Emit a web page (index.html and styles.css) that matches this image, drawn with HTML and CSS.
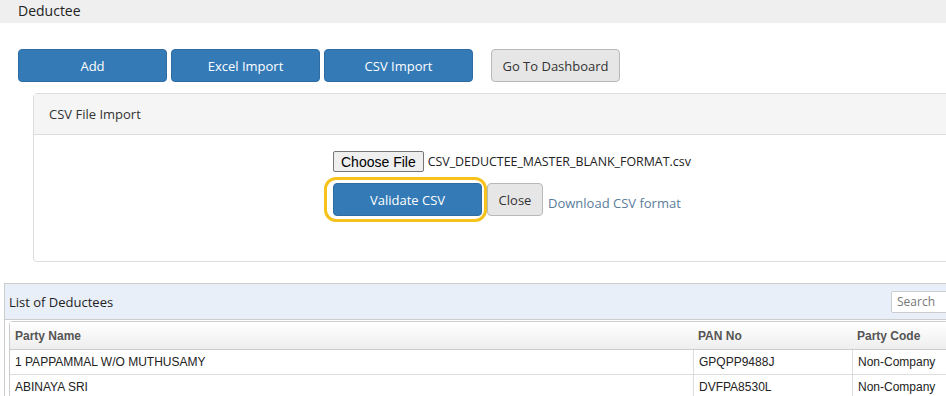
FILE: index.html
```html
<!DOCTYPE html>
<html>
<head>
    <title>Deductee</title>
    <link rel="stylesheet" href="styles.css">
</head>
<body>
    <div class="page-title">Deductee</div>

    <div class="button-container">
        <button class="blue-button">Add</button>
        <button class="blue-button">Excel Import</button>
        <button class="blue-button">CSV Import</button>
        <button class="gray-button dashboard-button">Go To Dashboard</button>
    </div>

    <div class="import-panel">
        <div class="import-heading">CSV File Import</div>
        <div class="import-body">
            <div class="file-row">
                <button class="choose-button">Choose File</button>
                <span class="file-name">CSV_DEDUCTEE_MASTER_BLANK_FORMAT.csv</span>
            </div>
            <div class="action-row">
                <span class="highlight">
                    <button class="blue-button validate-button">Validate CSV</button>
                </span>
                <button class="gray-button close-button">Close</button>
                <a class="download-link" href="#">Download CSV format</a>
            </div>
        </div>
    </div>

    <div class="list-panel">
        <div class="list-heading">
            <span>List of Deductees</span>
            <input class="search-box" type="text" placeholder="Search">
        </div>
        <table class="deductee-table">
            <thead>
                <tr>
                    <th class="col-name">Party Name</th>
                    <th class="col-pan">PAN No</th>
                    <th>Party Code</th>
                </tr>
            </thead>
            <tbody>
                <tr>
                    <td>1 PAPPAMMAL W/O MUTHUSAMY</td>
                    <td>GPQPP9488J</td>
                    <td>Non-Company</td>
                </tr>
                <tr>
                    <td>ABINAYA SRI</td>
                    <td>DVFPA8530L</td>
                    <td>Non-Company</td>
                </tr>
            </tbody>
        </table>
    </div>
</body>
</html>
```

FILE: styles.css
```css
body {
    margin: 0;
    background-color: white;
    font-family: "Open Sans", "Noto Sans", sans-serif;
    color: #333;
    overflow: hidden;
    width: 946px;
}
.page-title {
    height: 23px;
    line-height: 22px;
    padding-left: 18px;
    background-color: #efefef;
    font-size: 14px;
    color: #222;
}
.button-container {
    display: flex;
    gap: 4px;
    margin: 26px 0 0 18px;
}
.blue-button {
    width: 149px;
    height: 33px;
    background-color: #337ab7;
    border: 1px solid #2e6da4;
    border-radius: 4px;
    color: white;
    font-family: "Open Sans", sans-serif;
    font-size: 13px;
    cursor: pointer;
}
.gray-button {
    height: 33px;
    background-color: #e6e6e6;
    border: 1px solid #b8b8b8;
    border-radius: 4px;
    color: #333;
    font-family: "Open Sans", sans-serif;
    font-size: 13px;
    cursor: pointer;
}
.dashboard-button {
    width: 129px;
    margin-left: 14px;
}
.import-panel {
    width: 960px;
    margin: 11px 0 0 33px;
    border: 1px solid #ddd;
    border-radius: 4px;
}
.import-heading {
    height: 40px;
    line-height: 40px;
    padding-left: 15px;
    background-color: #f5f5f5;
    border-bottom: 1px solid #ddd;
    font-size: 13px;
    color: #333;
}
.import-body {
    height: 126px;
    padding: 16px 0 0 299px;
    box-sizing: border-box;
}
.file-row {
    display: flex;
    align-items: center;
    gap: 4px;
}
.choose-button {
    height: 21px;
    padding: 0 7px;
    background-color: #efefef;
    border: 1px solid #767676;
    border-radius: 2px;
    font-family: "Liberation Sans", Arial, sans-serif;
    font-size: 14px;
    color: #000;
}
.file-name {
    font-size: 12.4px;
    color: #222;
}
.action-row {
    display: flex;
    align-items: center;
    margin: 5px 0 0 -9px;
}
.highlight {
    display: inline-flex;
    padding: 3px 2px 3px 6px;
    border: 3px solid #f6c21c;
    border-radius: 12px;
}
.validate-button {
    width: 149px;
}
.close-button {
    width: 56px;
    margin-left: 0;
}
.download-link {
    margin: 6px 0 0 5px;
    font-size: 13px;
    color: #5a7d9b;
    text-decoration: none;
}
.list-panel {
    width: 960px;
    margin: 21px 0 0 4px;
    border-top: 1px solid #ccc;
    border-left: 1px solid #ccc;
}
.list-heading {
    display: flex;
    align-items: center;
    justify-content: space-between;
    height: 35px;
    padding-left: 4px;
    background-color: #e9eff8;
    border-bottom: 1px solid #ccc;
    font-size: 13px;
    color: #222;
}
.search-box {
    width: 74px;
    height: 22px;
    margin-right: 0;
    box-sizing: border-box;
    border: 1px solid #ccc;
    border-radius: 2px;
    padding: 0 5px;
    font-family: "Open Sans", sans-serif;
    font-size: 12px;
}
.search-box::placeholder {
    color: #777;
}
.deductee-table {
    width: 950px;
    margin: 1px 0 0 4px;
    border-collapse: separate;
    border-spacing: 0;
    font-family: "Liberation Sans", Arial, sans-serif;
    font-size: 12px;
    border-top: 1px solid #ccc;
    border-left: 1px solid #ccc;
    border-top-left-radius: 4px;
}
.deductee-table th {
    height: 27px;
    padding: 0 5px;
    text-align: left;
    font-weight: bold;
    color: #555;
    background: linear-gradient(#ffffff, #eeeeee);
    border-bottom: 1px solid #ccc;
}
.deductee-table td {
    height: 24px;
    padding: 0 5px;
    color: #222;
    border-bottom: 1px solid #ddd;
}
.deductee-table td + td {
    border-left: 1px solid #ddd;
}
.col-name {
    width: 673px;
}
.col-pan {
    width: 149px;
}
```
